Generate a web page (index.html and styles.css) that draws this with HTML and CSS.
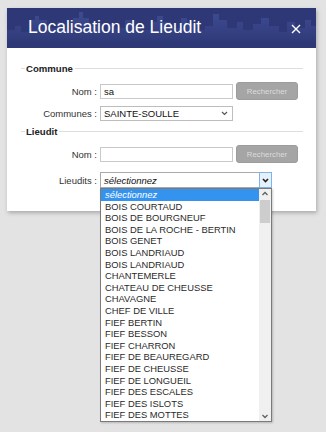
FILE: index.html
```html
<!DOCTYPE html>
<html>

<head>
  <title>Localisation de Lieudit</title>
  <link rel="stylesheet" href="styles.css">
</head>

<body>
  <div class="dialog">
    <!-- Title bar -->
    <div class="dialog-header">
      <svg class="skyline" width="309" height="40" viewBox="0 0 309 40">
        <defs>
          <linearGradient id="sky" x1="0" y1="0" x2="0" y2="1">
            <stop offset="0" stop-color="#3d4b92"/>
            <stop offset="1" stop-color="#2f3a78"/>
          </linearGradient>
        </defs>
        <path fill="url(#sky)" d="M0 34 V22 H8 V18 H14 V24 H22 V12 H28 V8 H32 V12 H40 V20 H50 V14 H56 V22 H66 V10 H72 V4 H76 V10 H82 V18 H92 V24 H100 V16 H108 V20 H118 V12 H124 V18 H134 V22 H144 V14 H150 V8 H156 V14 H164 V20 H174 V10 H180 V16 H190 V22 H198 V18 H206 V6 H212 V12 H220 V20 H230 V14 H236 V22 H246 V16 H254 V10 H262 V18 H272 V24 H280 V14 H288 V20 H298 V12 H304 V18 H309 V34 Z"/>
      </svg>
      <span class="dialog-title">Localisation de Lieudit</span>
      <svg class="close" width="10" height="10" viewBox="0 0 10 10">
        <path d="M1 1 L9 9 M9 1 L1 9" stroke="#fff" stroke-width="1.4"/>
      </svg>
    </div>

    <div class="dialog-body">
      <!-- Commune -->
      <div class="legend">Commune</div>
      <div class="row row-first">
        <span class="row-label">Nom :</span>
        <div class="field">sa</div>
        <button class="btn">Rechercher</button>
      </div>
      <div class="row row-second">
        <span class="row-label">Communes :</span>
        <div class="field select">
          <span>SAINTE-SOULLE</span>
          <svg width="7" height="5" viewBox="0 0 7 5"><path d="M1 1 L3.5 3.5 L6 1" fill="none" stroke="#555" stroke-width="1.2"/></svg>
        </div>
      </div>

      <!-- Lieudit -->
      <div class="legend legend-second">Lieudit</div>
      <div class="row row-first">
        <span class="row-label">Nom :</span>
        <div class="field"></div>
        <button class="btn">Rechercher</button>
      </div>
      <div class="row row-last">
        <span class="row-label">Lieudits :</span>
        <div class="select-wrap">
          <div class="field select select-wide">
            <span class="placeholder">sélectionnez</span>
            <span class="select-arrow">
              <svg width="7" height="5" viewBox="0 0 7 5"><path d="M1 1 L3.5 3.5 L6 1" fill="none" stroke="#222" stroke-width="1.6"/></svg>
            </span>
          </div>

          <!-- Opened list -->
          <div class="options">
            <div class="option-list">
              <div class="option selected">sélectionnez</div>
              <div class="option">BOIS COURTAUD</div>
              <div class="option">BOIS DE BOURGNEUF</div>
              <div class="option">BOIS DE LA ROCHE - BERTIN</div>
              <div class="option">BOIS GENET</div>
              <div class="option">BOIS LANDRIAUD</div>
              <div class="option">BOIS LANDRIAUD</div>
              <div class="option">CHANTEMERLE</div>
              <div class="option">CHATEAU DE CHEUSSE</div>
              <div class="option">CHAVAGNE</div>
              <div class="option">CHEF DE VILLE</div>
              <div class="option">FIEF BERTIN</div>
              <div class="option">FIEF BESSON</div>
              <div class="option">FIEF CHARRON</div>
              <div class="option">FIEF DE BEAUREGARD</div>
              <div class="option">FIEF DE CHEUSSE</div>
              <div class="option">FIEF DE LONGUEIL</div>
              <div class="option">FIEF DES ESCALES</div>
              <div class="option">FIEF DES ISLOTS</div>
              <div class="option">FIEF DES MOTTES</div>
            </div>
            <div class="scrollbar">
              <svg class="scroll-arrow" width="12" height="10" viewBox="0 0 12 10"><path d="M3.5 6 L6 3.5 L8.5 6" fill="none" stroke="#606060" stroke-width="1.3"/></svg>
              <div class="scroll-thumb"></div>
              <div class="scroll-track"></div>
              <svg class="scroll-arrow" width="12" height="10" viewBox="0 0 12 10"><path d="M3.5 4 L6 6.5 L8.5 4" fill="none" stroke="#606060" stroke-width="1.3"/></svg>
            </div>
          </div>
        </div>
      </div>
    </div>
  </div>
</body>

</html>
```

FILE: styles.css
```css
/* Global Styles */
html,
body {
  height: 100%;
}

body {
  margin: 0;
  background-color: #e3e3e3;
  font-family: "Liberation Sans", Arial, sans-serif;
  color: #333333;
}

/* Dialog */
.dialog {
  position: relative;
  width: 309px;
  margin: 8px 0 0 7px;
  background-color: #FFFFFF;
  box-shadow: 1px 2px 4px rgba(0, 0, 0, 0.25);
}

.dialog-header {
  position: relative;
  height: 40px;
  padding: 0 15px 0 21px;
  display: flex;
  align-items: center;
  justify-content: space-between;
  background-color: #2e3876;
  overflow: hidden;
}

.skyline {
  position: absolute;
  left: 0;
  top: 0;
}

.dialog-title {
  position: relative;
  color: #FFFFFF;
  font-size: 17.5px;
  margin-top: -1px;
}

.close {
  position: relative;
  margin-top: 2px;
}

.dialog-body {
  padding: 13px 13px 23px 14px;
}

/* Section legend */
.legend {
  display: flex;
  align-items: center;
  height: 14px;
  font-size: 9.6px;
  font-weight: bold;
  color: #222222;
}

.legend::before {
  content: "";
  width: 4px;
  height: 1px;
  margin-right: 1px;
  background-color: #dddddd;
}

.legend::after {
  content: "";
  flex: 1;
  height: 1px;
  margin-left: 2px;
  background-color: #dddddd;
}

.legend-second {
  margin-top: 3px;
}

/* Form rows */
.row {
  display: flex;
  align-items: center;
  font-size: 9.5px;
}

.row-first {
  height: 18px;
  margin-top: 7px;
}

.row-second {
  margin-top: 6px;
}

.row-last {
  margin-top: 9px;
}

.row-label {
  width: 76px;
  margin-right: 3px;
  text-align: right;
  color: #333333;
}

.field {
  box-sizing: border-box;
  width: 133px;
  height: 15px;
  padding: 0 3px;
  border: 1px solid #c9c9c9;
  line-height: 13px;
  color: #111111;
  background-color: #FFFFFF;
}

.select {
  display: flex;
  align-items: center;
  justify-content: space-between;
  padding-right: 4px;
  border-color: #bdbdbd;
}

.select-wide {
  width: 172px;
  height: 16px;
  padding-right: 0;
  border-color: #a9a9a9;
}

.placeholder {
  font-style: italic;
}

.select-arrow {
  box-sizing: border-box;
  width: 13px;
  height: 16px;
  margin: -1px -1px -1px 0;
  display: flex;
  align-items: center;
  justify-content: center;
  border: 1px solid #7eb4ea;
  background-color: #e5f1fb;
}

.btn {
  box-sizing: border-box;
  width: 62px;
  height: 18px;
  margin-left: 3px;
  padding: 0;
  border: 1px solid #9c9c9c;
  border-radius: 3px;
  background-color: #a5a5a5;
  color: #dcdcdc;
  font-family: "Liberation Sans", Arial, sans-serif;
  font-size: 7.8px;
}

/* Opened select list */
.select-wrap {
  position: relative;
}

.options {
  position: absolute;
  z-index: 10;
  left: 0;
  top: 16px;
  box-sizing: border-box;
  width: 172px;
  height: 234px;
  display: flex;
  border: 1px solid #7a7a7a;
  background-color: #FFFFFF;
  box-shadow: 1px 1px 2px rgba(0, 0, 0, 0.2);
}

.option-list {
  flex: 1;
}

.option {
  height: 11.6px;
  line-height: 11.6px;
  padding-left: 4px;
  font-size: 9.4px;
  color: #2a2a2a;
  white-space: nowrap;
}

.option.selected {
  background-color: #3593f0;
  color: #FFFFFF;
  font-style: italic;
}

.scrollbar {
  width: 12px;
  display: flex;
  flex-direction: column;
  background-color: #f0f0f0;
}

.scroll-arrow {
  display: block;
}

.scroll-thumb {
  height: 23px;
  margin: 1px 1px 0;
  background-color: #cdcdcd;
}

.scroll-track {
  flex: 1;
}
```
